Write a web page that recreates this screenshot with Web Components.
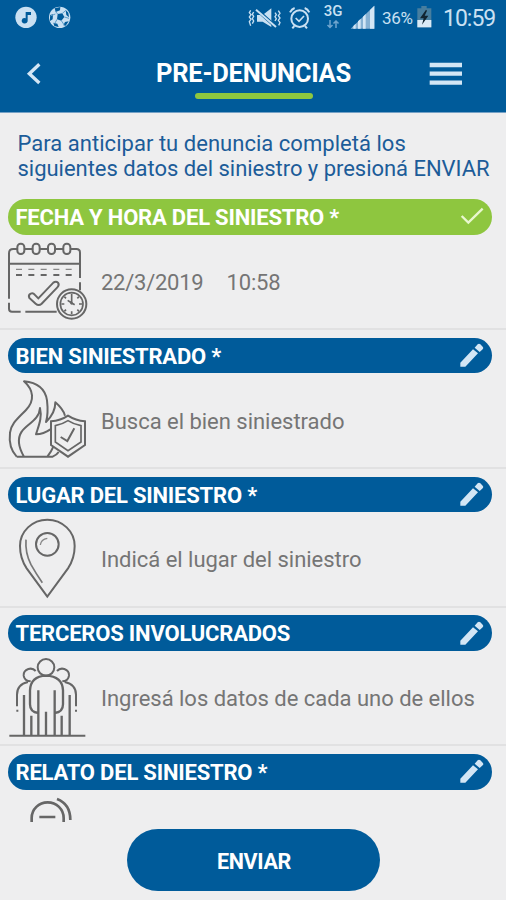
<!DOCTYPE html>
<html lang="es">
<head>
<meta charset="utf-8">
<title>Pre-denuncias</title>
<style>
html,body{margin:0;height:100%;overflow:hidden;background:#eeeeef}
body{font-family:Roboto,"Liberation Sans",sans-serif}
</style>
</head>
<body>
<claim-app></claim-app>
<script>
const define = (name, html) => {
  const t = document.createElement('template');
  t.innerHTML = html;
  customElements.define(name, class extends HTMLElement {
    constructor() {
      super();
      this.attachShadow({mode: 'open'}).append(t.content.cloneNode(true));
    }
  });
};

define('status-bar', `
<style>
:host{display:flex;height:36px;color:#c9e0f2;align-items:stretch;box-sizing:border-box}
svg{display:block;flex:none}
.sp{flex:1}
.net{width:22px;margin:0 4.500px 0 .5px;text-align:center;font:500 15px/15px Roboto,sans-serif;padding-top:4px}
.net svg{margin:1px auto 0}
.pct{width:33px;font-size:17px;line-height:37px;letter-spacing:-.35px;margin-left:5.500px}
.time{width:63px;font-size:23px;line-height:37px;letter-spacing:-1px;margin-left:10px;box-sizing:border-box}
</style>
<svg width="80" height="36" viewBox="0 0 240 108">
  <circle cx="78" cy="52" r="32" fill="#c9e0f2"/>
  <path d="M77 36h16v9H83v17a9 8 0 1 1-6-7z" fill="#005b9a"/>
  <circle cx="179" cy="52" r="32" fill="#c9e0f2"/>
  <path d="M173 42l14-2 6 11-9 11-13-4z M164 25l17-4-1 10-13 5z M197 30l8 8 2 14-8-7z M150 45l9-2-1 15-8 5z M160 68l12 3 4 10-13-3z M190 76l5-10 11-2-9 13z" fill="#005b9a"/>
  <path d="M173 42l-7-8m21 6l11-9m-5 20l14 4m-23 7l8 12m-21-16l-7 13m2-29l-15 6" stroke="#5e9dc9" stroke-width="3"/>
</svg>
<div class="sp"></div>
<svg width="75" height="36" viewBox="20 0 225 108" fill="none" stroke="#c9e0f2" stroke-width="4">
  <path d="M50 45h17l26-20v56L67 65H50z" fill="#c9e0f2" stroke="none"/>
  <path d="M47 27l60 54" stroke="#005b9a" stroke-width="10"/>
  <path d="M47 29l60 52" stroke-width="6"/>
  <path d="M31 31l-4 7 5 6-5 7 5 7-5 7 4 12M40 36l-4 7 4 6-4 7 4 7-4 8M104 38l4 6-4 6 4 6-4 7M114 32l5 8-5 7 5 7-5 7 5 7-4 8"/>
  <circle cx="178" cy="56" r="25" stroke-width="6"/>
  <path d="M149 37q5-10 14-13m30 0q9 3 14 13M162 78l-6 7m38-7l6 7" stroke-width="6"/>
  <path d="M166 54l10 10 15-16" stroke-width="5"/>
</svg>
<div class="net">3G<svg width="14" height="9" viewBox="0 0 14 9" fill="none" stroke="#6fa5ce" stroke-width="1.5"><path d="M4 0v7M1.500 5L4 7.500 6.500 5M10 8V1M7.500 3.500L10 1l2.500 2.500"/></svg></div>
<svg width="28" height="36" viewBox="327 0 84 108">
  <path d="M332 86L403 17v69z" fill="#86b1d3"/>
  <path d="M340 86v-8l7-7v15zM354 86V64l8-8v30zM369 86V50l8-8v44zM390 86V30l13-13v69z" fill="#d3e6f5"/>
</svg>
<div class="pct">36%</div>
<svg width="18" height="36" viewBox="527 0 54 108">
  <path d="M546 18h16v7h14v57h-42V25h12z" fill="#477e9f"/>
  <path d="M534 60h42v22h-42z" fill="#d9eaf6"/>
  <path d="M560 29l-18 26h11l-5 19 19-27h-11l7-15z" fill="#102431"/>
</svg>
<div class="time">10:59</div>
`);

define('title-bar', `
<style>
:host{display:grid;grid-template-columns:66px 1fr 106px;height:76px}
svg{display:block}
.t{display:flex;flex-direction:column;align-items:center;padding-left:41px}
b{font-size:25.500px;line-height:30px;color:#fff;margin-top:21.500px;white-space:nowrap;letter-spacing:-.25px}
i{display:block;width:118px;height:6px;border-radius:3px;background:#8ec73f;margin-top:5px}
</style>
<svg width="66" height="76" viewBox="0 108 198 228"><path d="M118 193L88 221l30 28" fill="none" stroke="#d3e6f5" stroke-width="10"/></svg>
<div class="t"><b><slot></slot></b><i></i></div>
<svg width="106" height="76" viewBox="480 108 318 228"><path d="M569 195h97M569 221h97M569 248h97" stroke="#d3e6f5" stroke-width="13"/></svg>
`);

define('claim-section', `
<style>
:host{display:block;height:138.75px;box-sizing:border-box;--pill:#005b9a}
.pill{display:flex;align-items:center;justify-content:space-between;height:35.500px;border-radius:18px;background:var(--pill);margin:0 14px 0 8px;padding-left:7.500px;color:#fff;font-weight:700;font-size:22px;letter-spacing:-.2px;white-space:nowrap}
.pill span{padding-top:1.500px}
.body{display:flex;height:93.500px;overflow:hidden;align-items:center;color:#757575;font-size:22px;letter-spacing:-.02px;white-space:pre;border-bottom:2px solid #e1e1e2}
.body>div{padding-top:2px}
:host([cut]) .body{height:32px;border:0;align-items:flex-start}
</style>
<div class="pill"><span><slot name="title"></slot></span><slot name="mark"></slot></div>
<div class="body"><slot name="icon"></slot><div><slot></slot></div></div>
`);

define('pencil-mark', `
<style>:host{display:block;width:38px;height:35px}svg{display:block}</style>
<svg width="38" height="35" viewBox="163 54 114 105" fill="#d3e6f5"><path d="M182 140v-12l38-40 15 12-38 40zM225 83l9-10q4-3 8 0l7 7q4 4 0 8l-9 8z"/></svg>
`);
define('check-mark', `
<style>:host{display:block;width:38px;height:35px}svg{display:block}</style>
<svg width="38" height="35" viewBox="605 253 114 105" fill="none" stroke="#e9f7cf" stroke-width="7"><path d="M628 304l20 20 43-42"/></svg>
`);

const icon = (name, box, body) => define(name, `
<style>:host{display:block;flex:none;width:101px;height:94px;align-self:flex-start;white-space:normal}svg{display:block}</style>
<svg width="101" height="94" viewBox="0 ${box} 303 282" fill="none" stroke="#666" stroke-width="6">${body}</svg>`);

icon('calendar-icon', 1, `
<path d="M51 43H40q-13 0-13 13v136M27 204v18q0 9 9 9h26M76 231h94M74 43h22M120 43h22M166 43h23M212 43h17q11 0 11 11v76M240 143v24M27 87h213"/>
<g stroke-width="6"><rect x="52" y="27" width="21" height="31" rx="10"/><rect x="98" y="27" width="21" height="31" rx="10"/><rect x="144" y="27" width="21" height="31" rx="10"/><rect x="190" y="27" width="21" height="31" rx="10"/></g>
<path d="M48 104h18M85 104h18M122 104h18M160 104h18M197 104h18" stroke="#888" stroke-width="4"/>
<path d="M48 121h18M85 121h18M122 121h18M160 121h18M197 121h18" stroke-width="6"/>
<path d="M88 190q-4-9 4-13 7-4 12 3l11 11 45-47q8-6 14 0 5 7-2 14l-47 49q-9 8-18 0z" stroke-width="6"/>
<circle cx="215" cy="208" r="44" stroke-width="6"/><circle cx="215" cy="208" r="34" stroke-width="5"/>
<path d="M215 177v27M215 230v9M184 208h9M237 208h9M193 186l5 5M237 186l-5 5M193 230l5-5M237 230l-5-5M203 197l12 8 9 5" stroke-width="5"/><circle cx="215" cy="206" r="4" fill="#666" stroke="none"/>`);

icon('fire-icon', 11, `
<path d="M50 262C31 242 27 216 30 190C33 163 54 147 78 122C105 94 101 62 72 36C113 40 136 60 141 93C144 119 145 135 138 158C154 143 166 124 166 99C179 110 191 125 195 139M50 262H158Q170 257 176 248M72 262C56 235 52 207 65 187C78 165 118 153 120 116C127 145 116 169 108 195Q131 194 151 180M142 262Q154 247 160 232" stroke-linejoin="round"/>
<path d="M204 139Q227 154 255 156V227L204 262L153 227V156Q182 154 204 139z"/><path d="M204 154Q221 165 243 169V218L204 244L166 218V169Q187 165 204 154z" stroke-width="5"/>
<path d="M182 203l20 12 21-38" stroke-width="6"/>`);

icon('pin-icon', 9, `
<path d="M142 263L80 178Q60 148 60 111A82 79 0 0 1 224 111Q224 148 204 178z"/>
<circle cx="142" cy="106" r="34"/><path d="M121 108q2-17 21-20" stroke="#888" stroke-width="4"/><path d="M78 92q-3 40 15 75 15 27 34 54" stroke="#777" stroke-width="5"/>`);

icon('people-icon', 18, `
<path d="M28 272h228"/>
<circle cx="138" cy="67" r="25"/>
<path d="M115 272V136M164 272V136M138 272V200M94 272V212M185 272V212M72 272V150M209 272V150M115 204Q90 202 90 178V136Q92 94 138 92Q187 94 189 136V178Q189 202 164 204" stroke-width="7"/>
<path d="M107 78Q98 68 85 72Q70 77 71 92Q73 108 92 109M171 78Q180 68 193 72Q208 77 207 92Q205 108 187 109M84 111Q51 118 51 149V184M194 111Q228 118 228 149V184M49 197h6M225 197h6"/>`);

icon('voice-icon', 119, `
<path d="M95 215V203A48 47 0 0 1 191 203V215M118 200h48M171 146Q211 161 211 209" stroke-width="8"/>`);

define('send-button', `
<style>:host{display:flex;align-items:center;justify-content:center;width:253px;height:62px;border-radius:31px;background:#005b9a;color:#fff;font-size:21.500px;font-weight:700;letter-spacing:-.35px;box-sizing:border-box;padding:2px 0 0 2px}</style>
<slot></slot>`);

define('claim-app', `
<style>
:host{display:flex;flex-direction:column;width:506px;height:900px;background:#eeeeef;overflow:hidden}
header{background:#005b9a;height:112px;flex:none;border-bottom:1px solid #75a1c6}
p{margin:0;padding:17.500px 0 0 17.500px;height:68.500px;font-size:22px;line-height:25.500px;color:#1c5c99;white-space:pre;flex:none}
main{height:623.500px;overflow:hidden;flex:none}
footer{display:flex;justify-content:center;padding-top:6.500px}
</style>
<header><status-bar></status-bar><title-bar>PRE-DENUNCIAS</title-bar></header>
<p><span style="letter-spacing:.03px">Para anticipar tu denuncia completá los</span>
<span style="letter-spacing:-.03px">siguientes datos del siniestro y presioná ENVIAR</span></p>
<main>
<claim-section style="--pill:#8ec63f"><span slot="title">FECHA Y HORA DEL SINIESTRO *</span><check-mark slot="mark"></check-mark><calendar-icon slot="icon"></calendar-icon><span style="letter-spacing:-.25px">22/3/2019</span><span style="margin-left:23px;letter-spacing:-.15px">10:58</span></claim-section>
<claim-section><span slot="title">BIEN SINIESTRADO *</span><pencil-mark slot="mark"></pencil-mark><fire-icon slot="icon"></fire-icon>Busca el bien siniestrado</claim-section>
<claim-section><span slot="title">LUGAR DEL SINIESTRO *</span><pencil-mark slot="mark"></pencil-mark><pin-icon slot="icon"></pin-icon>Indicá el lugar del siniestro</claim-section>
<claim-section><span slot="title">TERCEROS INVOLUCRADOS</span><pencil-mark slot="mark"></pencil-mark><people-icon slot="icon"></people-icon>Ingresá los datos de cada uno de ellos</claim-section>
<claim-section cut><span slot="title">RELATO DEL SINIESTRO *</span><pencil-mark slot="mark"></pencil-mark><voice-icon slot="icon"></voice-icon></claim-section>
</main>
<footer><send-button>ENVIAR</send-button></footer>
`);
</script>
</body>
</html>
